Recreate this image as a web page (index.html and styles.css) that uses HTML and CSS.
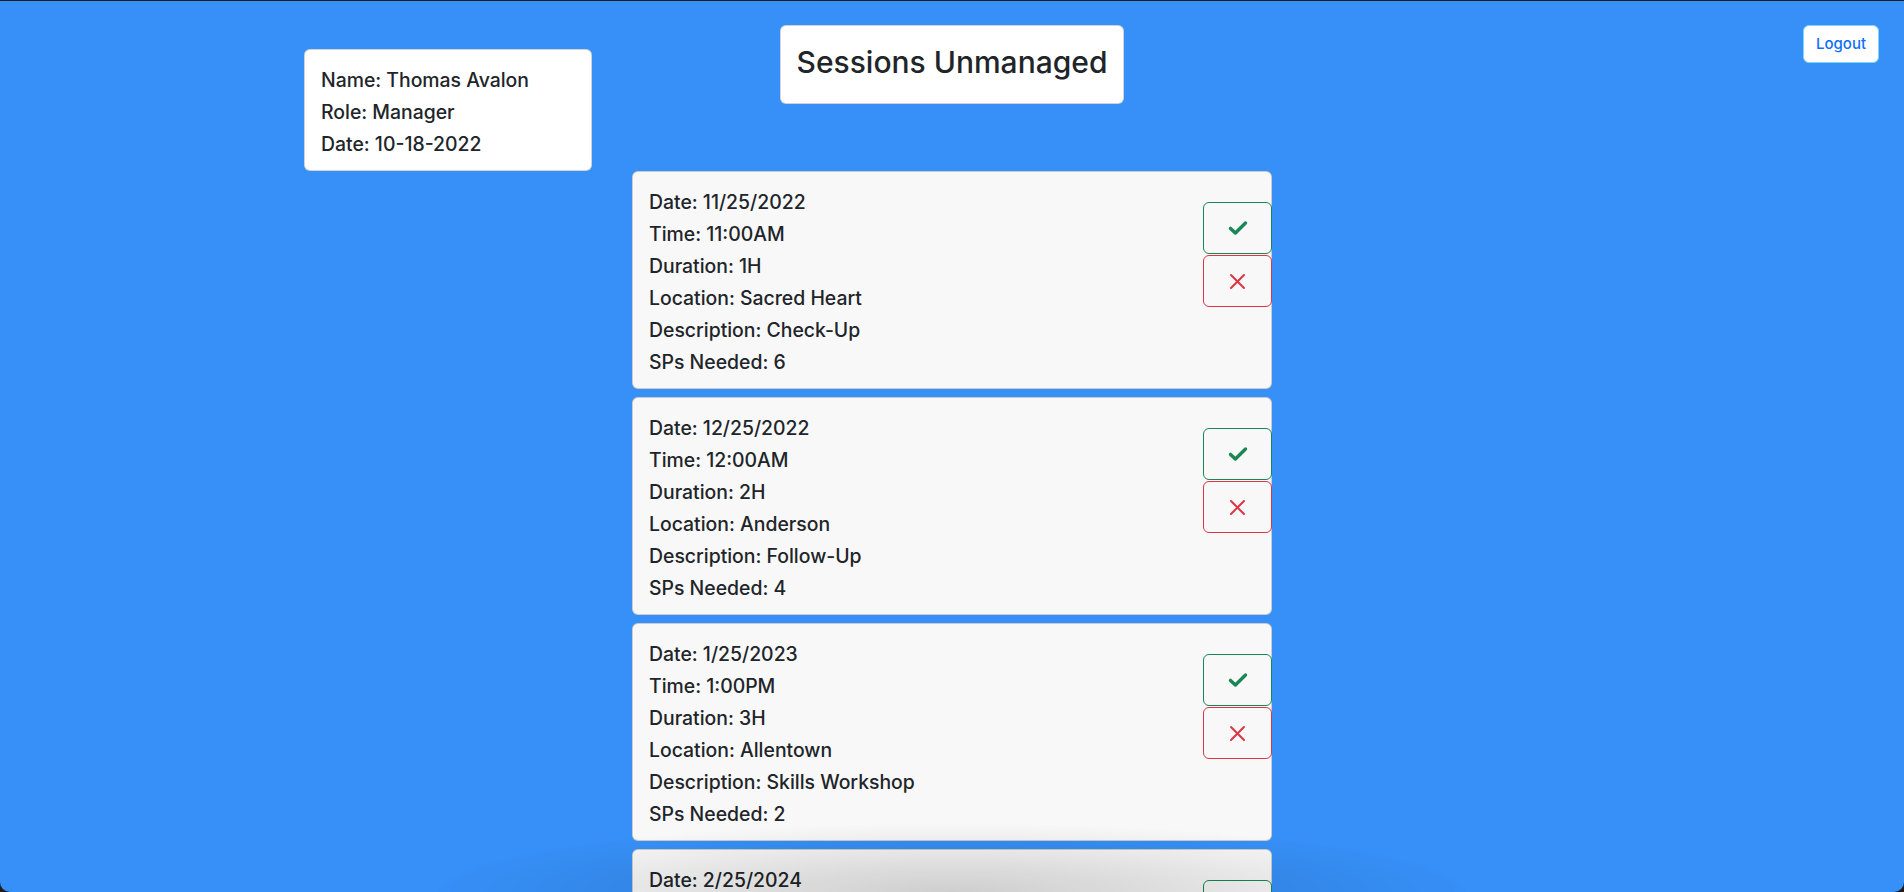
FILE: index.html
```html
<!DOCTYPE html>
<html lang="en">
<head>
<meta charset="utf-8">
<title>Sessions Unmanaged</title>
<link rel="stylesheet" href="styles.css">
</head>
<body>
<header class="top">
  <div class="top-left">
    <div class="info-card">
      <div class="line">Name: Thomas Avalon</div>
      <div class="line">Role: Manager</div>
      <div class="line">Date: 10-18-2022</div>
    </div>
  </div>
  <div class="top-center">
    <div class="title-box"><h2 class="title">Sessions Unmanaged</h2></div>
  </div>
  <div class="top-right">
    <button class="logout">Logout</button>
  </div>
</header>

<main class="sessions">
  <div class="session">
    <div class="session-body">
      <div class="line">Date: 11/25/2022</div>
      <div class="line">Time: 11:00AM</div>
      <div class="line">Duration: 1H</div>
      <div class="line">Location: Sacred Heart</div>
      <div class="line">Description: Check-Up</div>
      <div class="line">SPs Needed: 6</div>
    </div>
    <div class="actions">
      <button class="act accept"><svg width="20" height="16" viewBox="0 0 20 16"><path d="M2.5 8.4 L7.4 13 L17.5 3" fill="none" stroke="currentColor" stroke-width="3.4" stroke-linecap="round" stroke-linejoin="round"/></svg></button>
      <button class="act reject"><svg width="17" height="17" viewBox="0 0 17 17"><path d="M2 2 L15 15 M15 2 L2 15" fill="none" stroke="currentColor" stroke-width="2" stroke-linecap="round"/></svg></button>
    </div>
  </div>

  <div class="session">
    <div class="session-body">
      <div class="line">Date: 12/25/2022</div>
      <div class="line">Time: 12:00AM</div>
      <div class="line">Duration: 2H</div>
      <div class="line">Location: Anderson</div>
      <div class="line">Description: Follow-Up</div>
      <div class="line">SPs Needed: 4</div>
    </div>
    <div class="actions">
      <button class="act accept"><svg width="20" height="16" viewBox="0 0 20 16"><path d="M2.5 8.4 L7.4 13 L17.5 3" fill="none" stroke="currentColor" stroke-width="3.4" stroke-linecap="round" stroke-linejoin="round"/></svg></button>
      <button class="act reject"><svg width="17" height="17" viewBox="0 0 17 17"><path d="M2 2 L15 15 M15 2 L2 15" fill="none" stroke="currentColor" stroke-width="2" stroke-linecap="round"/></svg></button>
    </div>
  </div>

  <div class="session">
    <div class="session-body">
      <div class="line">Date: 1/25/2023</div>
      <div class="line">Time: 1:00PM</div>
      <div class="line">Duration: 3H</div>
      <div class="line">Location: Allentown</div>
      <div class="line">Description: Skills Workshop</div>
      <div class="line">SPs Needed: 2</div>
    </div>
    <div class="actions">
      <button class="act accept"><svg width="20" height="16" viewBox="0 0 20 16"><path d="M2.5 8.4 L7.4 13 L17.5 3" fill="none" stroke="currentColor" stroke-width="3.4" stroke-linecap="round" stroke-linejoin="round"/></svg></button>
      <button class="act reject"><svg width="17" height="17" viewBox="0 0 17 17"><path d="M2 2 L15 15 M15 2 L2 15" fill="none" stroke="currentColor" stroke-width="2" stroke-linecap="round"/></svg></button>
    </div>
  </div>

  <div class="session">
    <div class="session-body">
      <div class="line">Date: 2/25/2024</div>
      <div class="line">Time: 2:00PM</div>
      <div class="line">Duration: 1H</div>
      <div class="line">Location: Sacred Heart</div>
      <div class="line">Description: Check-Up</div>
      <div class="line">SPs Needed: 3</div>
    </div>
    <div class="actions">
      <button class="act accept"><svg width="20" height="16" viewBox="0 0 20 16"><path d="M2.5 8.4 L7.4 13 L17.5 3" fill="none" stroke="currentColor" stroke-width="3.4" stroke-linecap="round" stroke-linejoin="round"/></svg></button>
      <button class="act reject"><svg width="17" height="17" viewBox="0 0 17 17"><path d="M2 2 L15 15 M15 2 L2 15" fill="none" stroke="currentColor" stroke-width="2" stroke-linecap="round"/></svg></button>
    </div>
  </div>
</main>

<div class="bottom-shadow"></div>
<div class="window-frame"></div>
</body>
</html>
```

FILE: styles.css
```css
* { box-sizing: border-box; }

html {
  background: #3790f7;
}

body {
  margin: 0;
  border-top: 1px solid #1e1e1e;
  background: #3790f7;
  font-family: "Inter", "Noto Sans", sans-serif;
  color: #212529;
  min-height: 100vh;
}

.top {
  display: grid;
  grid-template-columns: 1fr auto 1fr;
  padding-top: 24px;
  align-items: start;
}

.top-left {
  padding-left: 304px;
  padding-top: 24px;
}

.info-card {
  width: 288px;
  background: #fff;
  border: 1px solid rgba(0, 0, 0, 0.175);
  border-radius: 6px;
  padding: 14px 16px 10px;
}

.line {
  font-size: 19.4px;
  font-weight: 500;
  line-height: 32px;
  white-space: nowrap;
}

.top-center {
  display: flex;
  justify-content: center;
}

.title-box {
  background: #fff;
  border: 1px solid rgba(0, 0, 0, 0.175);
  border-radius: 6px;
  padding: 18px 16px 22px;
}

.title {
  margin: 0;
  font-size: 30px;
  font-weight: 500;
  line-height: 37px;
  white-space: nowrap;
}

.top-right {
  display: flex;
  justify-content: flex-end;
  padding-right: 25px;
}

.logout {
  font-family: "Inter", "Noto Sans", sans-serif;
  font-size: 15px;
  line-height: 24px;
  padding: 6px 12px;
  width: 76px;
  height: 38px;
  color: #0d6efd;
  background: #fff;
  border: 1px solid #7fd6f7;
  border-radius: 6px;
  font-weight: 500;
}

.sessions {
  display: flex;
  flex-direction: column;
  align-items: center;
  gap: 8px;
}

.session {
  width: 640px;
  height: 218px;
  display: flex;
  background: #f8f8f8;
  border: 1px solid rgba(0, 0, 0, 0.175);
  border-radius: 6px;
  padding: 14px 0 10px 16px;
}

.session-body {
  flex: 1;
}

.actions {
  display: flex;
  flex-direction: column;
  gap: 1px;
  margin-top: 16px;
  margin-right: -1px;
}

.act {
  width: 69px;
  height: 52px;
  background: transparent;
  border: 1px solid;
  border-radius: 6px;
  display: flex;
  align-items: center;
  justify-content: center;
  padding: 0;
}

.accept {
  color: #198754;
  border-color: #198754;
}

.reject {
  color: #dc3545;
  border-color: #dc3545;
}

.bottom-shadow {
  position: fixed;
  left: 50%;
  bottom: 0;
  width: 1050px;
  height: 70px;
  transform: translateX(-50%);
  background: radial-gradient(ellipse at 50% 100%, rgba(0, 0, 0, 0.17), rgba(0, 0, 0, 0) 70%);
  pointer-events: none;
}

.window-frame {
  position: fixed;
  left: 0;
  right: 0;
  top: 0;
  bottom: 0;
  border-radius: 0 0 10px 10px;
  box-shadow: 0 0 0 30px #1e1e1e;
  pointer-events: none;
}
```
